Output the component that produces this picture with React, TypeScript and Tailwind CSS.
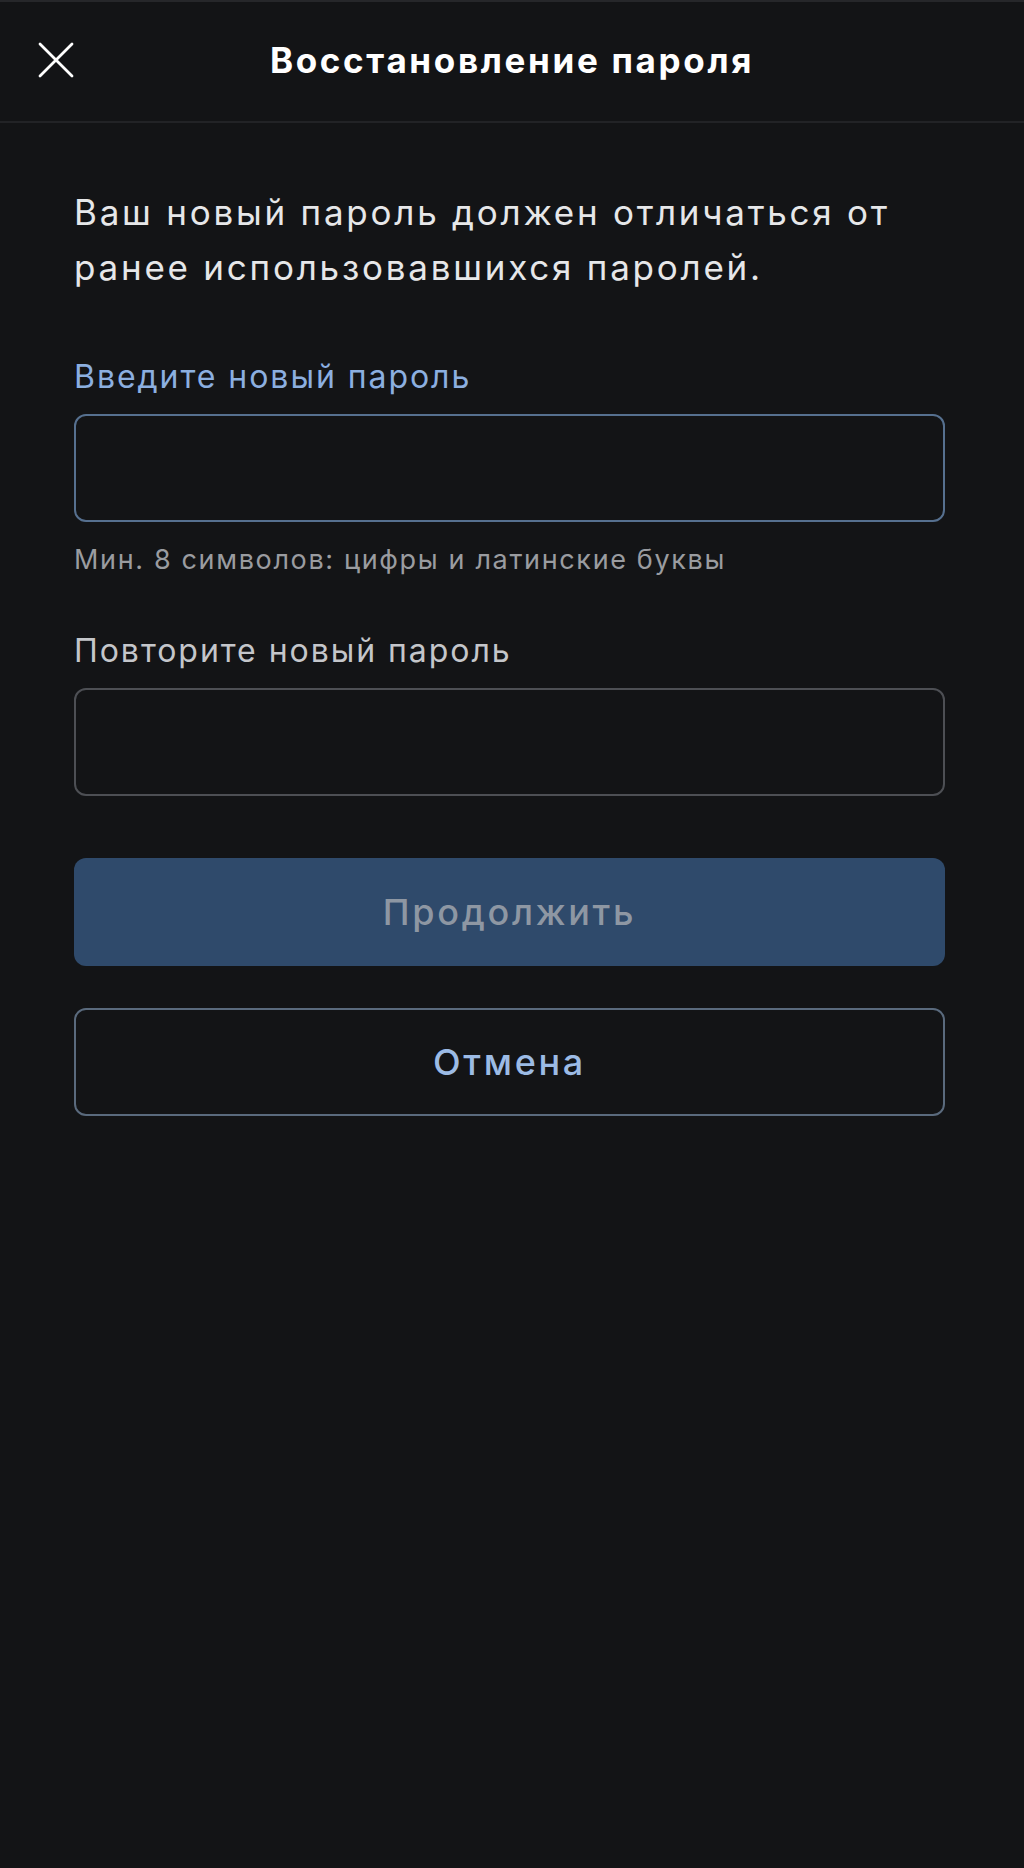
import React from 'react'

// Password reset screen (dark theme)
export default function App() {
  return (
    <div className="min-h-[1868px] w-full bg-[#131416] text-white" style={{ fontFamily: 'Inter, "Noto Sans", sans-serif' }}>
      <div className="h-[2px] bg-[#26272a]" />
      {/* Header */}
      <header className="relative flex h-[121px] items-center justify-center border-b-2 border-[#222326] pb-[3px]">
        <button className="absolute left-[38px] top-[40px] flex h-[36px] w-[36px] items-center justify-center text-white">
          <svg width="36" height="36" viewBox="0 0 36 36" fill="none" stroke="currentColor" strokeWidth="2.8" strokeLinecap="round">
            <path d="M2 2L34 34M34 2L2 34" />
          </svg>
        </button>
        <h1 className="text-[35px] font-bold tracking-[0.076em] text-white">Восстановление пароля</h1>
      </header>

      <main className="pl-[74px] pr-[79px] pt-[62px]">
        <p className="text-[35px] leading-[55px] tracking-[0.079em] text-[#e6e7e9]">
          Ваш новый пароль должен отличаться от ранее использовавшихся паролей.
        </p>

        <label className="mt-[62px] block text-[32px] leading-[40px] tracking-[0.061em] text-[#8cafe0]">Введите новый пароль</label>
        <div className="mt-[17px] h-[108px] rounded-[12px] border-2 border-[#56708f]" />
        <p className="mt-[20px] text-[27px] leading-[36px] tracking-[0.061em] text-[#9a9ca0]">Мин. 8 символов: цифры и латинские буквы</p>

        <label className="mt-[53px] block text-[32px] leading-[40px] tracking-[0.061em] text-[#c4c6ca]">Повторите новый пароль</label>
        <div className="mt-[17px] h-[108px] rounded-[12px] border-2 border-[#4d4f54]" />

        <button className="mt-[62px] flex h-[108px] w-full items-center justify-center rounded-[12px] bg-[#2f4a6b] text-[36px] font-medium tracking-[0.075em] text-[#8e97a3]">
          Продолжить
        </button>
        <button className="mt-[42px] flex h-[108px] w-full items-center justify-center rounded-[12px] border-2 border-[#5a6a7d] text-[36px] font-medium tracking-[0.075em] text-[#9cbbe5]">
          Отмена
        </button>
      </main>
    </div>
  )
}
